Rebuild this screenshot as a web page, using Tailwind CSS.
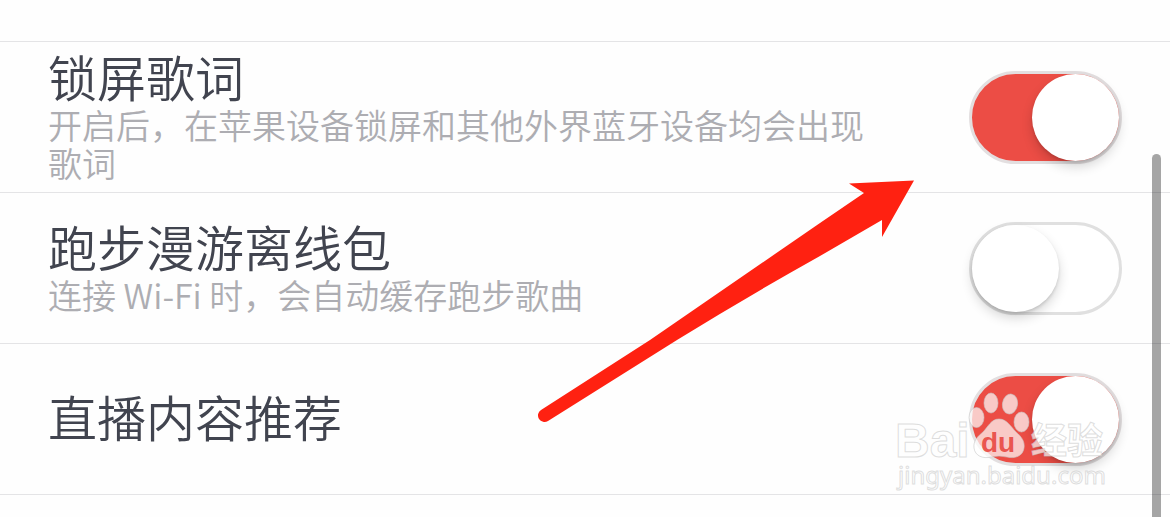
<!DOCTYPE html>
<html lang="zh-CN">
<head>
<meta charset="utf-8">
<meta name="viewport" content="width=device-width, initial-scale=1">
<title>设置</title>
<script src="https://cdn.jsdelivr.net/npm/@tailwindcss/browser@4"></script>
</head>
<body class="relative min-h-screen overflow-hidden bg-[#fefefe] font-['Noto_Sans_CJK_SC',sans-serif]">
<main>
  <div class="h-[42px] border-b border-[#e4e4e6]"></div>
  <ul>
    <li class="flex min-h-[151px] items-center gap-20 border-b border-[#e4e4e6] px-12">
      <label for="lyrics" class="flex-1 pb-1.5">
        <span class="block text-[49px] leading-[60px] font-[350] text-[#41444f]">锁屏歌词</span>
        <span class="block text-[34px] leading-[38px] font-[350] text-[#adadb2]">开启后，在苹果设备锁屏和其他外界蓝牙设备均会出现歌词</span>
      </label>
      <input id="lyrics" type="checkbox" role="switch" checked class="flex h-[93px] w-[153px] shrink-0 appearance-none items-center rounded-full border-3 border-[#e3dfe0] bg-white before:size-[87px] before:rounded-full before:bg-white before:shadow-[0_6px_12px_rgba(0,0,0,0.16),0_2px_3px_rgba(0,0,0,0.12)] checked:justify-end checked:bg-[#ec4d45]">
    </li>
    <li class="flex min-h-[151px] items-center gap-20 border-b border-[#e4e4e6] px-12">
      <label for="running" class="flex-1 pb-1.5">
        <span class="block text-[49px] leading-[60px] font-[350] text-[#41444f]">跑步漫游离线包</span>
        <span class="block text-[34px] leading-[38px] font-[350] text-[#adadb2]">连接 Wi-Fi 时，会自动缓存跑步歌曲</span>
      </label>
      <input id="running" type="checkbox" role="switch" class="flex h-[93px] w-[153px] shrink-0 appearance-none items-center rounded-full border-3 border-[#e0e0e0] bg-white before:size-[87px] before:rounded-full before:bg-white before:shadow-[0_6px_12px_rgba(0,0,0,0.16),0_2px_3px_rgba(0,0,0,0.12)] checked:justify-end checked:bg-[#ec4d45]">
    </li>
    <li class="flex min-h-[151px] items-center gap-20 border-b border-[#e4e4e6] px-12">
      <label for="live" class="flex-1 pb-1.5">
        <span class="block text-[49px] leading-[60px] font-[350] text-[#41444f]">直播内容推荐</span>
      </label>
      <input id="live" type="checkbox" role="switch" checked class="flex h-[93px] w-[153px] shrink-0 appearance-none items-center rounded-full border-3 border-[#e3dfe0] bg-white before:size-[87px] before:rounded-full before:bg-white before:shadow-[0_6px_12px_rgba(0,0,0,0.16),0_2px_3px_rgba(0,0,0,0.12)] checked:justify-end checked:bg-[#ec4d45]">
    </li>
  </ul>
</main>

<!-- scroll thumb -->
<div class="absolute top-[154px] right-[9px] -bottom-2 w-[9px] rounded-full bg-black/35"></div>

<!-- pointer arrow -->
<svg class="pointer-events-none absolute top-[170px] left-[530px] h-[260px] w-[400px]" viewBox="530 170 400 260" aria-hidden="true">
  <path fill="#ff2111" d="M914 180.500L849 183.500L864 193L820 223L650 340L541 410A6.500 6.500 0 0 0 548 421L677 340Q745 298 820 256L882 220V237Z"/>
</svg>

<!-- watermark -->
<svg class="pointer-events-none absolute right-[60px] bottom-[21px] h-[110px] w-[220px]" viewBox="890 386 220 110" role="img" aria-label="Baidu经验 jingyan.baidu.com">
  <g fill="#fff" fill-opacity=".7" stroke="#c8c8c8" stroke-opacity=".6" stroke-width="1">
    <ellipse cx="976.500" cy="417.500" rx="7.500" ry="10"/>
    <ellipse cx="991" cy="403" rx="7" ry="10"/>
    <ellipse cx="1010" cy="404" rx="7.500" ry="10" transform="rotate(10 1010 404)"/>
    <ellipse cx="1021.500" cy="422" rx="7.500" ry="10"/>
    <path d="M999 419C1007 419 1011 427 1016 432C1022 437 1025 442 1024 448C1023 456 1015 459 1007 457Q999 455 991 457C983 459 975 456 974 448C973 441 978 436 983 432C988 427 991 419 999 419Z"/>
    <text x="895" y="457" font-family="Liberation Sans, sans-serif" font-weight="700" font-size="48">Bai</text>
    <text x="1031" y="454" font-family="Noto Sans CJK SC, sans-serif" font-weight="700" font-size="36">经验</text>
    <text x="898" y="484" font-family="Noto Sans, sans-serif" font-size="24">jingyan.baidu.com</text>
  </g>
  <text x="981" y="452" fill="#e8463f" fill-opacity=".9" font-family="Liberation Sans, sans-serif" font-weight="700" font-size="28">du</text>
</svg>
</body>
</html>
